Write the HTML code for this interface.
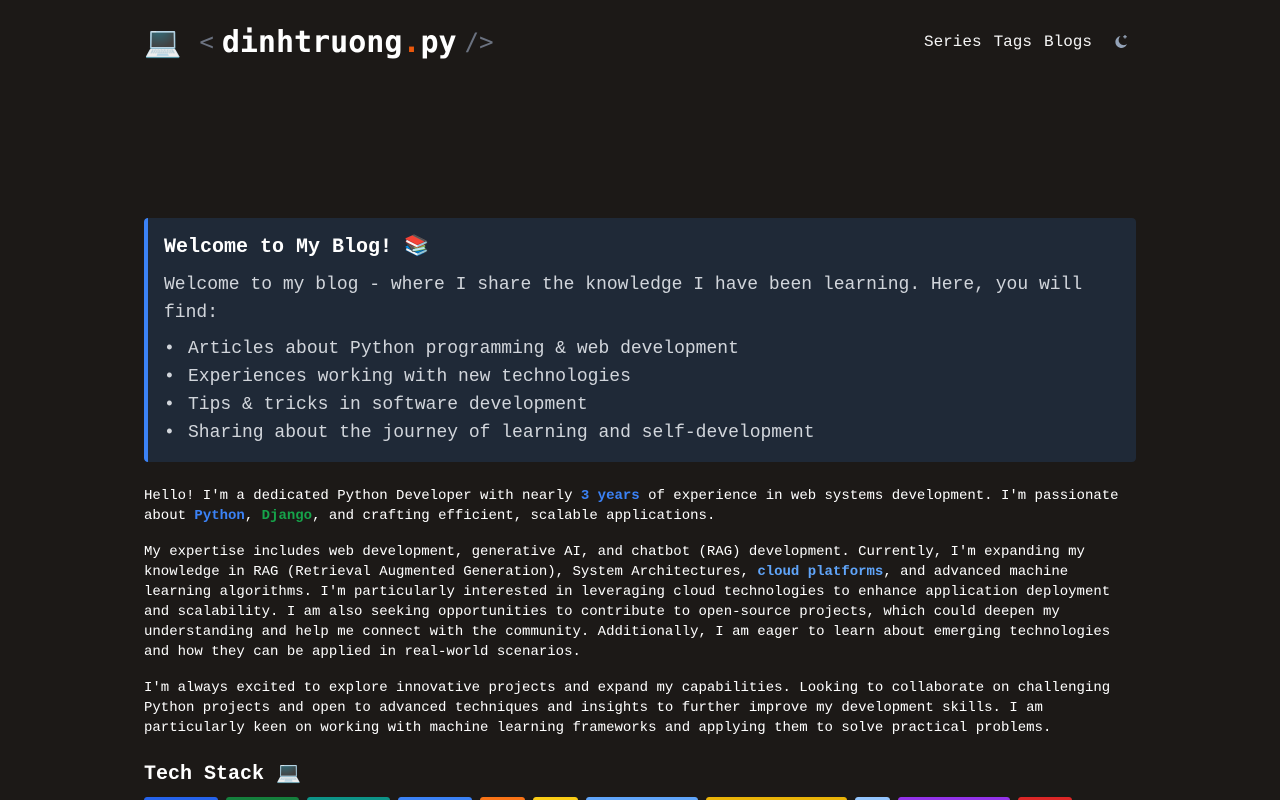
<!DOCTYPE html>
<html><head><meta charset="utf-8"><style>
*{margin:0;padding:0;box-sizing:border-box}
html{overflow:hidden;height:800px}
body{background:#1c1917;color:#fff;font-family:"Liberation Mono",monospace;width:1280px;height:800px;overflow:hidden;position:relative}
.logo{position:absolute;left:144px;top:20px;height:44px;display:flex;align-items:center}
.logo .emoji{font-size:30px;font-family:"DejaVu Sans",sans-serif;margin-right:18px}
.logo .br{color:#6b7280;font-family:"DejaVu Sans Mono",monospace;font-size:24px}
.logo .name{font-family:"DejaVu Sans Mono",monospace;font-weight:bold;font-size:30px;margin:0 8px}
.nav{position:absolute;right:150px;top:33px;display:flex;align-items:center;font-size:16px;color:#f5f5f5}
.nav span{margin-left:12px}
.box{position:absolute;left:144px;top:218px;width:992px;height:244px;background:#1f2937;border-left:4px solid #3b82f6;border-radius:4px;padding:16px 16px}
.box h2{font-size:20px;line-height:28px;font-weight:bold;color:#fff}
.box p{font-size:18px;line-height:28px;color:#d1d5db;margin-top:9px}
.box ul{list-style:none;margin-top:8px}
.box li{font-size:18px;line-height:28px;color:#d1d5db;padding-left:24px;position:relative}
.box li:before{content:"•";position:absolute;left:0}
.txt{position:absolute;left:144px;width:992px;font-size:14px;line-height:20px;color:#fff}
.b{color:#3b82f6;font-weight:bold}.g{color:#16a34a;font-weight:bold}.c{color:#60a5fa;font-weight:bold}
h3{position:absolute;left:144px;top:761px;font-size:20px;font-weight:bold;line-height:28px}
.badge{position:absolute;top:797px;height:3px;border-radius:3px 3px 0 0}
</style></head><body>
<div class="logo"><span class="emoji">💻</span><span class="br">&lt;</span><span class="name">dinhtruong<span style="color:#ea580c">.</span>py</span><span class="br">/&gt;</span></div>
<div class="nav"><span>Series</span><span>Tags</span><span>Blogs</span><span style="margin-left:20px;display:flex"><svg width="18" height="18" viewBox="0 0 18 18"><path d="M8.5 3A6 6 0 1 0 15 11 5 5 0 0 1 8.5 3z" fill="#94a3b8"/><path d="M13 2v3.5M11.25 3.75h3.5" stroke="#94a3b8" stroke-width="1.2"/></svg></span></div>
<div class="box"><h2>Welcome to My Blog! 📚</h2>
<p>Welcome to my blog - where I share the knowledge I have been learning. Here, you will find:</p>
<ul><li>Articles about Python programming &amp; web development</li><li>Experiences working with new technologies</li><li>Tips &amp; tricks in software development</li><li>Sharing about the journey of learning and self-development</li></ul></div>
<div class="txt" style="top:486px">Hello! I'm a dedicated Python Developer with nearly <span class="b">3 years</span> of experience in web systems development. I'm passionate about <span class="b">Python</span>, <span class="g">Django</span>, and crafting efficient, scalable applications.</div>
<div class="txt" style="top:542px">My expertise includes web development, generative AI, and chatbot (RAG) development. Currently, I'm expanding my knowledge in RAG (Retrieval Augmented Generation), System Architectures, <span class="c">cloud platforms</span>, and advanced machine learning algorithms. I'm particularly interested in leveraging cloud technologies to enhance application deployment and scalability. I am also seeking opportunities to contribute to open-source projects, which could deepen my understanding and help me connect with the community. Additionally, I am eager to learn about emerging technologies and how they can be applied in real-world scenarios.</div>
<div class="txt" style="top:678px">I'm always excited to explore innovative projects and expand my capabilities. Looking to collaborate on challenging Python projects and open to advanced techniques and insights to further improve my development skills. I am particularly keen on working with machine learning frameworks and applying them to solve practical problems.</div>
<h3>Tech Stack 💻</h3>
<div class="badge" style="left:144px;width:74px;background:#2563eb"></div>
<div class="badge" style="left:226px;width:73px;background:#15803d"></div>
<div class="badge" style="left:307px;width:83px;background:#0d9488"></div>
<div class="badge" style="left:398px;width:74px;background:#3b82f6"></div>
<div class="badge" style="left:480px;width:45px;background:#f97316"></div>
<div class="badge" style="left:533px;width:45px;background:#facc15"></div>
<div class="badge" style="left:586px;width:112px;background:#60a5fa"></div>
<div class="badge" style="left:706px;width:141px;background:#eab308"></div>
<div class="badge" style="left:855px;width:35px;background:#93c5fd"></div>
<div class="badge" style="left:898px;width:112px;background:#9333ea"></div>
<div class="badge" style="left:1018px;width:54px;background:#dc2626"></div>
</body></html>
